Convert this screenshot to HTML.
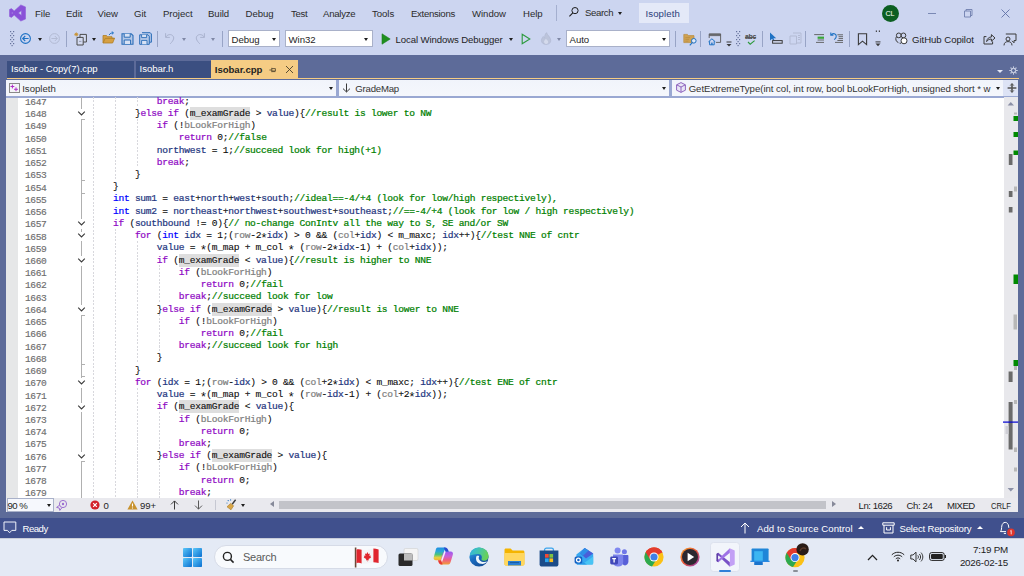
<!DOCTYPE html>
<html><head><meta charset="utf-8"><title>Isopleth - Microsoft Visual Studio</title>
<style>
*{margin:0;padding:0;box-sizing:border-box}
html,body{width:1024px;height:576px;overflow:hidden}
body{position:relative;background:#5d6b99;font-family:"Liberation Sans",sans-serif;font-size:9.6px;letter-spacing:-0.04px;color:#1e1e1e}
.abs{position:absolute}
#top{position:absolute;left:0;top:0;width:1024px;height:55px;background:#ccd5f0}
.mi{position:absolute;top:7px;height:13px;line-height:13px;white-space:pre;color:#2b2b2b}
.tx{position:absolute;white-space:pre;line-height:13px;height:13px}
.combo{position:absolute;background:#fff;border:1px solid #a9b1c9;height:17px;top:30px}
.combo span{position:absolute;left:2.6px;top:2px;line-height:13px;white-space:pre}
.arr{position:absolute;width:0;height:0;border-left:2.5px solid transparent;border-right:2.5px solid transparent;border-top:3px solid #1e1e1e}
.sep{position:absolute;width:1.3px;background:#98a4c6;top:30.5px;height:16.5px}
/* tabs */
.tab{position:absolute;top:61px;height:17px;background:#3b4f81;color:#fff;line-height:15px;padding-left:4px;white-space:pre}
#tabline{position:absolute;left:6.5px;top:77.7px;width:1012px;height:1.8px;background:#f5cc84}
#nav{position:absolute;left:6.2px;top:79.5px;width:1012.3px;height:18px;background:#9aa8d2}
.nb{position:absolute;top:0;height:16.4px;background:linear-gradient(#f1f4fb,#f5f7fc)}
.nb span{position:absolute;top:2px;line-height:13px;white-space:pre;color:#333;letter-spacing:-0.12px}
/* editor */
#ed{position:absolute;left:0;top:0;width:1024px;height:576px;pointer-events:none;font-family:"Liberation Mono",monospace;font-size:9.6px;letter-spacing:-0.27px}
#edbg{position:absolute;left:6px;top:97.5px;width:998px;height:401px;background:#fff}
#gut{position:absolute;left:6px;top:97.5px;width:11.7px;height:401px;background:#e6e7e8}
.fl{position:absolute;width:1.2px;background:#b0b0b0}
.ft{position:absolute;width:3.6px;height:1px;background:#b0b0b0}
.ln{position:absolute;left:18px;width:28.3px;letter-spacing:-0.45px;text-align:right;height:12px;line-height:12px;color:#6e6e6e;white-space:pre;-webkit-text-stroke:0.15px #6e6e6e}
.cl{position:absolute;height:12px;line-height:12px;white-space:pre;color:#0c0c0c;-webkit-text-stroke:0.1px currentColor}
.k{color:#8f08c4}.t{color:#0000ff}.c{color:#008000}.p{color:#808080}.l{color:#1f377f}
.k,.t,.c,.p,.l{-webkit-text-stroke:0.22px currentColor}
.h{background:#dedede;padding:1.3px 0 0.6px}
.ig{position:absolute;width:1px;background:repeating-linear-gradient(to bottom,#d8d8dd 0,#d8d8dd 2px,transparent 2px,transparent 3.5px)}
.fd{position:absolute;left:76.5px}
.a{display:inline-block;width:5.49px;letter-spacing:0;font-size:12.5px;line-height:1px;vertical-align:-3.6px;text-indent:-1px;-webkit-text-stroke:0}

</style></head><body>
<div id="top"></div>
<!-- VS logo -->
<svg class="abs" style="left:8px;top:4px" width="18" height="18" viewBox="0 0 18 18"><path d="M12.8 0.9 L17.5 2.9 V15.1 L12.8 17.1 L6.2 11.1 L3.4 13.4 L1.5 12.5 V5.5 L3.4 4.6 L6.2 6.9 Z M13.4 6.6 L10.4 9 L13.4 11.4 Z M3.9 7.9 V10.1 L5.1 9 Z" fill="#8a52d8" stroke="#8a52d8" stroke-width="0.5" stroke-linejoin="round" fill-rule="evenodd"/></svg>
<div class="mi" style="left:35px">File</div>
<div class="mi" style="left:66px">Edit</div>
<div class="mi" style="left:97.5px">View</div>
<div class="mi" style="left:134px">Git</div>
<div class="mi" style="left:163px">Project</div>
<div class="mi" style="left:208px">Build</div>
<div class="mi" style="left:245.5px">Debug</div>
<div class="mi" style="left:291px;letter-spacing:-0.3px">Test</div>
<div class="mi" style="left:323px;letter-spacing:-0.25px">Analyze</div>
<div class="mi" style="left:372px">Tools</div>
<div class="mi" style="left:411px;letter-spacing:-0.3px">Extensions</div>
<div class="mi" style="left:472px">Window</div>
<div class="mi" style="left:523px">Help</div>
<div class="abs" style="left:556px;top:5px;width:1px;height:16px;background:#a4afcf"></div>
<svg class="abs" style="left:568px;top:6px" width="12" height="12" viewBox="0 0 12 12"><circle cx="7" cy="4.6" r="3.1" fill="none" stroke="#1e1e1e" stroke-width="1"/><path d="M4.8 6.9 L1.4 10.4" stroke="#1e1e1e" stroke-width="1.1" fill="none"/></svg>
<div class="mi" style="left:585px;top:6px;letter-spacing:-0.35px">Search</div>
<div class="arr" style="left:617.6px;top:12px"></div>
<div class="abs" style="left:638.5px;top:3px;width:50px;height:20px;background:#e4e9f8"></div>
<div class="mi" style="left:645.5px;color:#2c3e7a;letter-spacing:0.1px">Isopleth</div>
<div class="abs" style="left:881.5px;top:4.5px;width:17px;height:17px;border-radius:50%;background:#0c5f22;color:#fff;font-size:7.2px;text-align:center;line-height:17px;letter-spacing:0">CL</div>
<div class="abs" style="left:928px;top:12.5px;width:8px;height:1px;background:#7a89b4"></div>
<svg class="abs" style="left:962px;top:7px" width="12" height="12" viewBox="0 0 12 12"><path d="M2.5 4 H8.5 V10 H2.5 Z M4 4 V2.5 H10 V8.5 H8.5" fill="none" stroke="#6f7fae" stroke-width="0.9"/></svg>
<svg class="abs" style="left:1000px;top:8px" width="11" height="11" viewBox="0 0 11 11"><path d="M1.5 1.5 L9.5 9.5 M9.5 1.5 L1.5 9.5" stroke="#5f71a6" stroke-width="0.9"/></svg>
<!-- toolbar -->
<svg class="abs" style="left:10.2px;top:29.5px" width="5" height="17" viewBox="0 0 5 17"><g fill="#66729c"><rect x="0" y="1" width="1.2" height="1.2"/><rect x="3" y="1" width="1.2" height="1.2"/><rect x="1.5" y="3" width="1.2" height="1.2"/><rect x="0" y="5" width="1.2" height="1.2"/><rect x="3" y="5" width="1.2" height="1.2"/><rect x="1.5" y="7" width="1.2" height="1.2"/><rect x="0" y="9" width="1.2" height="1.2"/><rect x="3" y="9" width="1.2" height="1.2"/><rect x="1.5" y="11" width="1.2" height="1.2"/><rect x="0" y="13" width="1.2" height="1.2"/><rect x="3" y="13" width="1.2" height="1.2"/><rect x="1.5" y="15" width="1.2" height="1.2"/></g></svg>
<svg class="abs" style="left:19px;top:32px" width="13" height="13" viewBox="0 0 13 13"><circle cx="6.5" cy="6.5" r="4.9" fill="none" stroke="#1f72c4" stroke-width="1.1"/><path d="M9.6 6.5 H3.8 M6.2 4 L3.7 6.5 L6.2 9" fill="none" stroke="#1f72c4" stroke-width="1.1"/></svg>
<div class="arr" style="left:37.5px;top:38px"></div>
<svg class="abs" style="left:47.5px;top:31.6px" width="13" height="13" viewBox="0 0 13 13"><circle cx="6.5" cy="6.5" r="4.9" fill="none" stroke="#b3bbd4" stroke-width="1"/><path d="M3.4 6.5 H9.2 M6.8 4 L9.3 6.5 L6.8 9" fill="none" stroke="#b3bbd4" stroke-width="1"/></svg>
<div class="sep" style="left:66px"></div>
<svg class="abs" style="left:74px;top:32px" width="14" height="14" viewBox="0 0 14 14"><path d="M6 2.4 H12.4 V10 H6 Z" fill="#d3daf0" stroke="#4a4a4a" stroke-width="1"/><path d="M3 5.4 H9.2 V13 H3 Z" fill="#d3daf0" stroke="#4a4a4a" stroke-width="1"/><path d="M5 9.4 H7.4" stroke="#8a8fa8" stroke-width="0.8"/><path d="M2.3 0.4 V4.4 M0.3 2.4 H4.3 M0.9 1 L3.7 3.8 M3.7 1 L0.9 3.8" stroke="#c8922e" stroke-width="0.9"/></svg>
<div class="arr" style="left:92px;top:38px"></div>
<svg class="abs" style="left:101.8px;top:30.8px" width="14" height="14" viewBox="0 0 14 14"><path d="M1 12 V4.5 H4.5 L5.5 5.7 H10 V7.2 H12.6 L10.6 12 Z" fill="#d6a043" stroke="#b07f24" stroke-width="0.8"/><path d="M1.2 11.8 L3.2 7.4 H12.4" fill="none" stroke="#b07f24" stroke-width="0.8"/><path d="M7.2 4 C8 2.2 9.6 1.8 11.2 1.9 M9.8 0.6 L11.5 1.9 L9.9 3.4" fill="none" stroke="#1f72c4" stroke-width="1"/></svg>
<svg class="abs" style="left:120.5px;top:33px" width="13" height="12" viewBox="0 0 13 12"><path d="M1 0.8 H10.2 L12 2.6 V11.2 H1 Z" fill="#b4c8e8" stroke="#2a6db8" stroke-width="1.1"/><path d="M3.2 0.8 V4.2 H9.2 V0.8" fill="#d8e2f4" stroke="#2a6db8" stroke-width="1"/><path d="M3.2 11 V7 H9.6 V11" fill="#d8e2f4" stroke="#2a6db8" stroke-width="1"/></svg>
<svg class="abs" style="left:138.5px;top:32px" width="13" height="13" viewBox="0 0 13 13"><path d="M3 0.7 H11.2 L12.4 2 V10.2 H10.4" fill="#b4c8e8" stroke="#2a6db8" stroke-width="1"/><path d="M0.7 2.8 H9 L10.3 4.2 V12.3 H0.7 Z" fill="#b4c8e8" stroke="#2a6db8" stroke-width="1"/><path d="M2.6 2.8 V5.6 H7.6 V2.8 M2.6 12.2 V8.4 H8 V12.2" fill="#d8e2f4" stroke="#2a6db8" stroke-width="0.9"/></svg>
<div class="sep" style="left:156.5px"></div>
<svg class="abs" style="left:164px;top:32px" width="12" height="13" viewBox="0 0 12 13"><path d="M1.6 1.2 V5.4 H5.8 M1.8 5.2 C3.2 2.6 6.4 1.8 8.4 3.4 C10.6 5.2 10 8.2 6.2 11.8" fill="none" stroke="#aab3cf" stroke-width="1"/></svg>
<div class="arr" style="left:182px;top:38px;border-top-color:#7f88a6"></div>
<svg class="abs" style="left:193.5px;top:32px" width="12" height="13" viewBox="0 0 12 13"><path d="M10.4 1.2 V5.4 H6.2 M10.2 5.2 C8.8 2.6 5.6 1.8 3.6 3.4 C1.4 5.2 2 8.2 5.8 11.8" fill="none" stroke="#aab3cf" stroke-width="1"/></svg>
<div class="arr" style="left:210.5px;top:38px;border-top-color:#7f88a6"></div>
<div class="sep" style="left:221.5px"></div>
<div class="combo" style="left:228px;width:51.5px"><span>Debug</span></div>
<div class="arr" style="left:271.5px;top:37.5px"></div>
<div class="combo" style="left:285px;width:87.5px"><span>Win32</span></div>
<div class="arr" style="left:363.5px;top:37.5px"></div>
<svg class="abs" style="left:380.5px;top:33px" width="10" height="12" viewBox="0 0 10 12"><path d="M1 0.8 L9.2 6 L1 11.2 Z" fill="#1f8f1f" stroke="#1b7f1b" stroke-width="0.6"/></svg>
<div class="tx" style="left:395.5px;top:33px;letter-spacing:-0.1px">Local Windows Debugger</div>
<div class="arr" style="left:509px;top:38px"></div>
<svg class="abs" style="left:520.5px;top:33px" width="10" height="12" viewBox="0 0 10 12"><path d="M1.2 1.2 L8.8 6 L1.2 10.8 Z" fill="none" stroke="#2c9a3c" stroke-width="1.1"/></svg>
<svg class="abs" style="left:540px;top:32px" width="12" height="13" viewBox="0 0 12 13"><path d="M6.6 0.6 C7 3 10.8 5 10.8 8.6 C10.8 11 8.8 12.4 6.2 12.4 C3.6 12.4 1.4 11 1.4 8.4 C1.4 6.6 2.4 5.6 3.2 4.4 C3.6 5.2 4 5.8 4.6 6 C4.4 4 5.2 1.8 6.6 0.6 Z" fill="#bcc4db" stroke="#aab2cc" stroke-width="0.5"/><path d="M6.2 12 C4.8 12 4 11 4 9.8 C4 8.6 5 7.8 6 6.8 C6.6 8 8.2 8.6 8.2 10 C8.2 11.2 7.4 12 6.2 12 Z" fill="#d4daec"/></svg>
<div class="arr" style="left:556.5px;top:38px;border-top-color:#7f88a6"></div>
<div class="combo" style="left:566px;width:104px"><span>Auto</span></div>
<div class="arr" style="left:661.5px;top:37.5px"></div>
<div class="sep" style="left:675px"></div>
<svg class="abs" style="left:682.5px;top:32.5px" width="15" height="14" viewBox="0 0 15 14"><path d="M0.8 9.6 V1.4 H4.4 L5.4 2.6 H11 V9.6 Z" fill="#cfa152" stroke="#b98c3c" stroke-width="0.7"/><path d="M2.4 4.6 H7 M2.4 6.4 H6 M2.4 8.2 H5.4" stroke="#b98c3c" stroke-width="0.7"/><circle cx="10.8" cy="7.8" r="2.3" fill="#dfe8f8" stroke="#1f72c4" stroke-width="1"/><path d="M9.2 9.6 L6.8 12.4" stroke="#1f72c4" stroke-width="1.1"/></svg>
<div class="sep" style="left:700px"></div>
<svg class="abs" style="left:707.5px;top:33px" width="14" height="13" viewBox="0 0 14 13"><path d="M1.2 5 V0.9 H12.6 V9.4 H8" fill="none" stroke="#585858" stroke-width="0.9"/><path d="M1.2 1.4 H12.6 M1.2 2.6 H12.6" stroke="#585858" stroke-width="0.9"/><path d="M0.5 8.8 L3.9 5.8 L7.3 8.8 M1.6 8.2 V11.8 H6.2 V8.2" fill="none" stroke="#1f72c4" stroke-width="1"/><rect x="3.2" y="9.6" width="1.4" height="2.2" fill="#1f72c4"/></svg>
<svg class="abs" style="left:725.5px;top:41px" width="6" height="6" viewBox="0 0 6 6"><rect x="0.5" y="0.5" width="5" height="1" fill="#3a3a3a"/><path d="M0.5 3 H5.5 L3 5.6 Z" fill="#3a3a3a"/></svg>
<svg class="abs" style="left:736.2px;top:29.5px" width="5" height="17" viewBox="0 0 5 17"><g fill="#66729c"><rect x="0" y="1" width="1.2" height="1.2"/><rect x="3" y="1" width="1.2" height="1.2"/><rect x="1.5" y="3" width="1.2" height="1.2"/><rect x="0" y="5" width="1.2" height="1.2"/><rect x="3" y="5" width="1.2" height="1.2"/><rect x="1.5" y="7" width="1.2" height="1.2"/><rect x="0" y="9" width="1.2" height="1.2"/><rect x="3" y="9" width="1.2" height="1.2"/><rect x="1.5" y="11" width="1.2" height="1.2"/><rect x="0" y="13" width="1.2" height="1.2"/><rect x="3" y="13" width="1.2" height="1.2"/><rect x="1.5" y="15" width="1.2" height="1.2"/></g></svg>
<div class="abs" style="left:745px;top:33px;font-size:7px;font-weight:bold;letter-spacing:-0.3px;color:#4a4a4a;line-height:8px">abc</div><div class="abs" style="left:745px;top:36.5px;width:10.8px;height:0.6px;background:#5a5a5a"></div>
<svg class="abs" style="left:747px;top:39.6px" width="9" height="5" viewBox="0 0 9 5"><path d="M1 2 L3.2 4.2 L7.6 0.6" fill="none" stroke="#2c9a3c" stroke-width="1.1"/></svg>
<div class="sep" style="left:762px"></div>
<svg class="abs" style="left:769px;top:32px" width="15" height="14" viewBox="0 0 15 14"><path d="M1 0.4 V8.6 L3.1 6.8 L4.6 9.6 L5.8 9 L4.4 6.2 H7.2 Z" fill="#1f72c4"/><rect x="3.6" y="8.6" width="9.6" height="2.6" fill="#d3daf0" stroke="#3a3a3a" stroke-width="1"/></svg>
<svg class="abs" style="left:788.5px;top:32px" width="13" height="13" viewBox="0 0 13 13"><path d="M4 1 H12 V11 H8 M1 4 H7.5 V12 H1 Z M9 3.5 H11 M9 5.5 H11 M9 7.5 H11" fill="none" stroke="#b3bbd4" stroke-width="1"/></svg>
<div class="sep" style="left:805px"></div>
<svg class="abs" style="left:813px;top:33px" width="12" height="11" viewBox="0 0 12 11"><path d="M1.2 1.6 H11 M4.6 7 H11 M3 9.4 H11" stroke="#5a5a5a" stroke-width="0.9"/><rect x="4.6" y="3.6" width="6.4" height="2.2" fill="#3aa83a"/></svg>
<svg class="abs" style="left:830px;top:32px" width="14" height="12" viewBox="0 0 14 12"><path d="M7.4 2.8 H13 M8.6 4.7 H13 M8.6 6.6 H13 M7.4 8.5 H13 M5 10.4 H13" stroke="#5a5a5a" stroke-width="0.9"/><path d="M1.4 2.6 C3.8 0.6 6.8 2 6.2 4.8 C6 6 5.2 6.8 4.2 7.6 M0.8 0.6 V3.2 H3.4" fill="none" stroke="#1f72c4" stroke-width="1.1"/></svg>
<div class="sep" style="left:848.5px"></div>
<svg class="abs" style="left:857px;top:32.5px" width="11" height="13" viewBox="0 0 11 13"><path d="M1.4 0.8 H9.6 V11.6 L5.5 8.2 L1.4 11.6 Z" fill="none" stroke="#3a3a3a" stroke-width="1.1"/></svg>
<svg class="abs" style="left:874.5px;top:30px" width="6" height="17" viewBox="0 0 6 17"><rect x="0.8" y="0.5" width="1.2" height="1.4" fill="#3a3a3a"/><rect x="3.8" y="0.5" width="1.2" height="1.4" fill="#3a3a3a"/><rect x="0.5" y="11.4" width="5" height="1" fill="#3a3a3a"/><path d="M0.5 13.6 H5.5 L3 16.2 Z" fill="#3a3a3a"/></svg>
<svg class="abs" style="left:895px;top:32px" width="13" height="13" viewBox="0 0 13 13"><circle cx="3.8" cy="3.4" r="2.4" fill="none" stroke="#3a3a3a" stroke-width="1"/><circle cx="8.4" cy="3.4" r="2.4" fill="none" stroke="#3a3a3a" stroke-width="1"/><path d="M1.4 4.6 C0.2 7 0.8 9.6 3.4 10.6 M4.6 11.2 H6" fill="none" stroke="#3a3a3a" stroke-width="1"/><circle cx="9" cy="8.8" r="3" fill="#fff" stroke="#3a3a3a" stroke-width="1"/></svg>
<div class="tx" style="left:912px;top:33px">GitHub Copilot</div>
<svg class="abs" style="left:982.5px;top:32.5px" width="13" height="12" viewBox="0 0 13 12"><path d="M3.4 3.6 H1 V11 H9.6 V8.4" fill="none" stroke="#3a3a3a" stroke-width="1"/><path d="M3.6 8.6 C4 5.6 6 4 8.4 4 V1.6 L12 5 L8.4 8.2 V6 C6.4 6 4.8 6.8 3.6 8.6 Z" fill="none" stroke="#3a3a3a" stroke-width="1"/></svg>
<svg class="abs" style="left:1003px;top:32.5px" width="14" height="13" viewBox="0 0 14 13"><path d="M2.8 1 H13 V7.6 H11 V9.8 L9 7.8" fill="none" stroke="#3a3a3a" stroke-width="1"/><circle cx="5" cy="6" r="2" fill="#ccd5f0" stroke="#3a3a3a" stroke-width="1"/><path d="M1 12.4 C1 9.6 3 8.6 5 8.6 C7 8.6 9 9.6 9 12.4" fill="#ccd5f0" stroke="#3a3a3a" stroke-width="1"/></svg>
<!-- document tabs -->
<div class="tab" style="left:7px;width:126.5px">Isobar - Copy(7).cpp</div>
<div class="tab" style="left:135.5px;width:75px">Isobar.h</div>
<div class="tab" style="left:210.8px;width:87.2px;top:59.7px;height:18.3px;background:#f5cc84;color:#1e1e1e;font-weight:bold;line-height:19px">Isobar.cpp</div>
<svg class="abs" style="left:269px;top:65.6px" width="8" height="8" viewBox="0 0 8 8"><path d="M0.4 4 H2.8 M2.8 1.8 V6.2 M2.8 2.6 H6.4 V5 H2.8 M3.2 5.6 H6.4" fill="none" stroke="#4a3f2a" stroke-width="0.8"/></svg>
<svg class="abs" style="left:284.5px;top:64.5px" width="9" height="9" viewBox="0 0 9 9"><path d="M1 1 L8 8 M8 1 L1 8" stroke="#4a3f2a" stroke-width="0.9"/></svg>
<div class="arr" style="left:996.5px;top:70px;border-top-color:#e1e6f4;border-left-width:3px;border-right-width:3px;border-top-width:3.2px"></div>
<svg class="abs" style="left:1009px;top:65.5px" width="9" height="9" viewBox="0 0 9 9"><circle cx="4.5" cy="4.5" r="2.1" fill="none" stroke="#e1e6f4" stroke-width="1"/><path d="M4.5 0.4 V1.8 M4.5 7.2 V8.6 M0.4 4.5 H1.8 M7.2 4.5 H8.6 M1.6 1.6 L2.6 2.6 M6.4 6.4 L7.4 7.4 M7.4 1.6 L6.4 2.6 M1.6 7.4 L2.6 6.4" stroke="#e1e6f4" stroke-width="1.1"/></svg>
<div id="tabline"></div>
<div id="nav">
  <div class="nb" style="left:0;width:329.5px"><span style="left:16px;letter-spacing:0">Isopleth</span></div>
  <div class="nb" style="left:333.1px;width:329.8px"><span style="left:16px;letter-spacing:-0.2px">GradeMap</span></div>
  <div class="nb" style="left:666.2px;width:330.2px"><span style="left:16.3px;letter-spacing:-0.03px">GetExtremeType(int col, int row, bool bLookForHigh, unsigned short * w</span></div>
  <div class="nb" style="left:996.8px;width:15.5px;background:#dde3f5"></div>
</div>
<svg class="abs" style="left:9px;top:82.5px" width="11" height="10" viewBox="0 0 11 10"><rect x="0.5" y="0.5" width="10" height="9" fill="#f4f4f8" stroke="#8a8a8a" stroke-width="1"/><path d="M3.4 1.6 V5.4 M1.5 3.5 H5.3 M7 4.4 V8.2 M5.1 6.3 H8.9" stroke="#b030c8" stroke-width="1"/></svg>
<div class="arr" style="left:329px;top:86.9px"></div>
<svg class="abs" style="left:342px;top:83px" width="9" height="10" viewBox="0 0 9 10"><path d="M4.5 0.5 V8.8 M1 5.6 L4.5 9 L8 5.6" fill="none" stroke="#3a3a3a" stroke-width="1"/></svg>
<div class="arr" style="left:662.4px;top:86.9px"></div>
<svg class="abs" style="left:675.5px;top:82px" width="10" height="11" viewBox="0 0 10 11"><path d="M5 0.6 L9.4 2.8 V8.2 L5 10.4 L0.6 8.2 V2.8 Z" fill="#e9e6f6" stroke="#8556b8" stroke-width="0.9"/><path d="M0.8 2.9 L5 5 L9.2 2.9 M5 5 V10.2" fill="none" stroke="#8556b8" stroke-width="0.9"/></svg>
<div class="arr" style="left:995.6px;top:86.9px"></div>
<svg class="abs" style="left:1006.5px;top:83px" width="10" height="10" viewBox="0 0 10 10"><path d="M5 0.8 V9.2 M0.6 5 H9.4" fill="none" stroke="#555" stroke-width="1.6"/><path d="M3.2 2.6 L5 0.6 L6.8 2.6 M3.2 7.4 L5 9.4 L6.8 7.4" fill="none" stroke="#555" stroke-width="1"/></svg>
<div id="edbg"></div>

<div id="ed">
<div id="gut"></div>
<div class="fl" style="left:81.0px;top:97.0px;height:12.3px"></div>
<div class="fl" style="left:81.0px;top:118.8px;height:100.6px"></div>
<div class="fl" style="left:81.0px;top:228.9px;height:2.7px"></div>
<div class="fl" style="left:81.0px;top:241.1px;height:15.0px"></div>
<div class="fl" style="left:81.0px;top:265.6px;height:39.4px"></div>
<div class="fl" style="left:81.0px;top:314.5px;height:63.9px"></div>
<div class="fl" style="left:81.0px;top:387.9px;height:15.0px"></div>
<div class="fl" style="left:81.0px;top:412.4px;height:39.4px"></div>
<div class="fl" style="left:81.0px;top:461.3px;height:36.7px"></div>
<div class="ft" style="left:81.0px;top:118.8px"></div>
<div class="ft" style="left:81.0px;top:314.5px"></div>
<div class="ft" style="left:81.0px;top:461.3px"></div>
<div class="ft" style="left:81.0px;top:180.4px"></div>
<div class="ft" style="left:81.0px;top:192.6px"></div>
<div class="ft" style="left:81.0px;top:363.8px"></div>
<div class="ft" style="left:81.0px;top:376.1px"></div>
<div class="ln" style="top:97px">1647</div>
<div class="cl" style="top:96px;left:156.84px"><span class="k">break</span>;</div>
<div class="ln" style="top:109px">1648</div>
<div class="cl" style="top:108px;left:134.88px">}<span class="k">else</span> <span class="k">if</span> (<span class="h">m_examGrade</span> &gt; <span class="l">value</span>){<span class="c">//result is lower to NW</span></div>
<div class="ln" style="top:121px">1649</div>
<div class="cl" style="top:120px;left:156.84px"><span class="k">if</span> (!<span class="p">bLookForHigh</span>)</div>
<div class="ln" style="top:134px">1650</div>
<div class="cl" style="top:132px;left:178.80px"><span class="k">return</span> 0;<span class="c">//false</span></div>
<div class="ln" style="top:146px">1651</div>
<div class="cl" style="top:145px;left:156.84px"><span class="l">northwest</span> = 1;<span class="c">//succeed look for high(+1)</span></div>
<div class="ln" style="top:158px">1652</div>
<div class="cl" style="top:157px;left:156.84px"><span class="k">break</span>;</div>
<div class="ln" style="top:170px">1653</div>
<div class="cl" style="top:169px;left:134.88px">}</div>
<div class="ln" style="top:183px">1654</div>
<div class="cl" style="top:181px;left:112.92px">}</div>
<div class="ln" style="top:195px">1655</div>
<div class="cl" style="top:193px;left:112.92px"><span class="t">int</span> <span class="l">sum1</span> = <span class="l">east</span>+<span class="l">north</span>+<span class="l">west</span>+<span class="l">south</span>;<span class="c">//ideal==-4/+4 (look for low/high respectively),</span></div>
<div class="ln" style="top:207px">1656</div>
<div class="cl" style="top:206px;left:112.92px"><span class="t">int</span> <span class="l">sum2</span> = <span class="l">northeast</span>+<span class="l">northwest</span>+<span class="l">southwest</span>+<span class="l">southeast</span>;<span class="c">//==-4/+4 (look for low / high respectively)</span></div>
<div class="ln" style="top:219px">1657</div>
<div class="cl" style="top:218px;left:112.92px"><span class="k">if</span> (<span class="l">southbound</span> != 0){<span class="c">// no-change ConIntv all the way to S, SE and/or SW</span></div>
<div class="ln" style="top:232px">1658</div>
<div class="cl" style="top:230px;left:134.88px"><span class="k">for</span> (<span class="t">int</span> <span class="l">idx</span> = 1;(<span class="p">row</span>-2<span class="a">*</span><span class="l">idx</span>) &gt; 0 &amp;&amp; (<span class="p">col</span>+<span class="l">idx</span>) &lt; m_maxc; <span class="l">idx</span>++){<span class="c">//test NNE of cntr</span></div>
<div class="ln" style="top:244px">1659</div>
<div class="cl" style="top:242px;left:156.84px"><span class="l">value</span> = <span class="a">*</span>(m_map + m_col <span class="a">*</span> (<span class="p">row</span>-2<span class="a">*</span><span class="l">idx</span>-1) + (<span class="p">col</span>+<span class="l">idx</span>));</div>
<div class="ln" style="top:256px">1660</div>
<div class="cl" style="top:255px;left:156.84px"><span class="k">if</span> (<span class="h">m_examGrade</span> &lt; <span class="l">value</span>){<span class="c">//result is higher to NNE</span></div>
<div class="ln" style="top:268px">1661</div>
<div class="cl" style="top:267px;left:178.80px"><span class="k">if</span> (<span class="p">bLookForHigh</span>)</div>
<div class="ln" style="top:280px">1662</div>
<div class="cl" style="top:279px;left:200.76px"><span class="k">return</span> 0;<span class="c">//fail</span></div>
<div class="ln" style="top:293px">1663</div>
<div class="cl" style="top:291px;left:178.80px"><span class="k">break</span>;<span class="c">//succeed look for low</span></div>
<div class="ln" style="top:305px">1664</div>
<div class="cl" style="top:304px;left:156.84px">}<span class="k">else</span> <span class="k">if</span> (<span class="h">m_examGrade</span> &gt; <span class="l">value</span>){<span class="c">//result is lower to NNE</span></div>
<div class="ln" style="top:317px">1665</div>
<div class="cl" style="top:316px;left:178.80px"><span class="k">if</span> (!<span class="p">bLookForHigh</span>)</div>
<div class="ln" style="top:329px">1666</div>
<div class="cl" style="top:328px;left:200.76px"><span class="k">return</span> 0;<span class="c">//fail</span></div>
<div class="ln" style="top:342px">1667</div>
<div class="cl" style="top:340px;left:178.80px"><span class="k">break</span>;<span class="c">//succeed look for high</span></div>
<div class="ln" style="top:354px">1668</div>
<div class="cl" style="top:352px;left:156.84px">}</div>
<div class="ln" style="top:366px">1669</div>
<div class="cl" style="top:365px;left:134.88px">}</div>
<div class="ln" style="top:378px">1670</div>
<div class="cl" style="top:377px;left:134.88px"><span class="k">for</span> (<span class="l">idx</span> = 1;(<span class="p">row</span>-<span class="l">idx</span>) &gt; 0 &amp;&amp; (<span class="p">col</span>+2<span class="a">*</span><span class="l">idx</span>) &lt; m_maxc; <span class="l">idx</span>++){<span class="c">//test ENE of cntr</span></div>
<div class="ln" style="top:391px">1671</div>
<div class="cl" style="top:389px;left:156.84px"><span class="l">value</span> = <span class="a">*</span>(m_map + m_col <span class="a">*</span> (<span class="p">row</span>-<span class="l">idx</span>-1) + (<span class="p">col</span>+2<span class="a">*</span><span class="l">idx</span>));</div>
<div class="ln" style="top:403px">1672</div>
<div class="cl" style="top:401px;left:156.84px"><span class="k">if</span> (<span class="h">m_examGrade</span> &lt; <span class="l">value</span>){</div>
<div class="ln" style="top:415px">1673</div>
<div class="cl" style="top:414px;left:178.80px"><span class="k">if</span> (<span class="p">bLookForHigh</span>)</div>
<div class="ln" style="top:427px">1674</div>
<div class="cl" style="top:426px;left:200.76px"><span class="k">return</span> 0;</div>
<div class="ln" style="top:439px">1675</div>
<div class="cl" style="top:438px;left:178.80px"><span class="k">break</span>;</div>
<div class="ln" style="top:452px">1676</div>
<div class="cl" style="top:450px;left:156.84px">}<span class="k">else</span> <span class="k">if</span> (<span class="h">m_examGrade</span> &gt; <span class="l">value</span>){</div>
<div class="ln" style="top:464px">1677</div>
<div class="cl" style="top:462px;left:178.80px"><span class="k">if</span> (!<span class="p">bLookForHigh</span>)</div>
<div class="ln" style="top:476px">1678</div>
<div class="cl" style="top:475px;left:200.76px"><span class="k">return</span> 0;</div>
<div class="ln" style="top:488px">1679</div>
<div class="cl" style="top:487px;left:178.80px"><span class="k">break</span>;</div>
<div class="ig" style="left:92.7px;top:97.0px;height:401.0px"></div>
<div class="ig" style="left:114.6px;top:97.0px;height:82.6px"></div>
<div class="ig" style="left:114.6px;top:228.5px;height:269.5px"></div>
<div class="ig" style="left:136.6px;top:97.0px;height:9.2px"></div>
<div class="ig" style="left:136.6px;top:118.5px;height:48.9px"></div>
<div class="ig" style="left:136.6px;top:240.8px;height:122.3px"></div>
<div class="ig" style="left:136.6px;top:387.5px;height:110.5px"></div>
<div class="ig" style="left:158.5px;top:265.2px;height:36.7px"></div>
<div class="ig" style="left:158.5px;top:314.1px;height:36.7px"></div>
<div class="ig" style="left:158.5px;top:412.0px;height:36.7px"></div>
<div class="ig" style="left:158.5px;top:460.9px;height:37.1px"></div>
<svg class="fd" style="top:110.13px" width="9" height="7" viewBox="0 0 9 7"><path d="M1.2 1.6 L4.5 4.9 L7.8 1.6" fill="none" stroke="#3a3a3a" stroke-width="1.1"/></svg>
<svg class="fd" style="top:220.20px" width="9" height="7" viewBox="0 0 9 7"><path d="M1.2 1.6 L4.5 4.9 L7.8 1.6" fill="none" stroke="#3a3a3a" stroke-width="1.1"/></svg>
<svg class="fd" style="top:232.43px" width="9" height="7" viewBox="0 0 9 7"><path d="M1.2 1.6 L4.5 4.9 L7.8 1.6" fill="none" stroke="#3a3a3a" stroke-width="1.1"/></svg>
<svg class="fd" style="top:256.89px" width="9" height="7" viewBox="0 0 9 7"><path d="M1.2 1.6 L4.5 4.9 L7.8 1.6" fill="none" stroke="#3a3a3a" stroke-width="1.1"/></svg>
<svg class="fd" style="top:305.81px" width="9" height="7" viewBox="0 0 9 7"><path d="M1.2 1.6 L4.5 4.9 L7.8 1.6" fill="none" stroke="#3a3a3a" stroke-width="1.1"/></svg>
<svg class="fd" style="top:379.19px" width="9" height="7" viewBox="0 0 9 7"><path d="M1.2 1.6 L4.5 4.9 L7.8 1.6" fill="none" stroke="#3a3a3a" stroke-width="1.1"/></svg>
<svg class="fd" style="top:403.65px" width="9" height="7" viewBox="0 0 9 7"><path d="M1.2 1.6 L4.5 4.9 L7.8 1.6" fill="none" stroke="#3a3a3a" stroke-width="1.1"/></svg>
<svg class="fd" style="top:452.57px" width="9" height="7" viewBox="0 0 9 7"><path d="M1.2 1.6 L4.5 4.9 L7.8 1.6" fill="none" stroke="#3a3a3a" stroke-width="1.1"/></svg>
</div>
<!-- vertical scrollbar -->
<div class="abs" style="left:1003.5px;top:97px;width:14.5px;height:401px;background:#e8e8ec"></div>
<svg class="abs" style="left:1003px;top:97px" width="15" height="401" viewBox="0 0 15 401">
<path d="M4.6 8.6 L7.8 5 L11 8.6 Z" fill="#8b90a6"/>
<path d="M4.6 391 L7.8 394.6 L11 391 Z" fill="#8b90a6"/>
<rect x="11" y="15.5" width="3" height="2" fill="#b8b8b8"/>
<rect x="10.5" y="19" width="4.5" height="5" fill="#008a00"/>
<rect x="10.5" y="35" width="4.5" height="5" fill="#008a00"/>
<rect x="10.5" y="53.5" width="4.5" height="4.5" fill="#008a00"/>
<rect x="5.8" y="57" width="3.7" height="11" fill="#6a6a6a"/>
<rect x="11" y="89.5" width="3" height="5" fill="#b8b8b8"/>
<rect x="5.8" y="94" width="3.7" height="6" fill="#6a6a6a"/>
<rect x="5.8" y="110" width="3.7" height="5.5" fill="#6a6a6a"/>
<rect x="10.5" y="177.5" width="4.5" height="9.5" fill="#008a00"/>
<rect x="10.5" y="217.5" width="3.5" height="15" fill="#b8b8b8"/>
<rect x="10.5" y="263" width="4.5" height="6" fill="#008a00"/>
<rect x="11" y="269" width="3" height="4" fill="#b8b8b8"/>
<rect x="5.6" y="274.5" width="4" height="10.5" fill="#6a6a6a"/>
<rect x="11" y="303" width="3" height="4" fill="#b8b8b8"/>
<rect x="5.6" y="305" width="4" height="47.5" fill="#6a6a6a"/>
<rect x="2.5" y="329" width="3" height="8" fill="#cfcfd6"/>
<rect x="0" y="324.5" width="15" height="1.2" fill="#0000d0"/>
<rect x="11" y="350.5" width="3" height="4.5" fill="#b8b8b8"/>
<rect x="11" y="370.5" width="3" height="4" fill="#b8b8b8"/>
</svg>
<!-- bottom info bar -->
<div class="abs" style="left:6px;top:498px;width:1012px;height:14px;background:#e9e9ee"></div>
<div class="abs" style="left:6.5px;top:498px;width:47px;height:14px;background:#f6f8fd;border:1px solid #a9b1c9"></div>
<div class="tx" style="left:7.5px;top:498.5px;letter-spacing:-0.5px">90 %</div>
<div class="arr" style="left:46.5px;top:504px"></div>
<svg class="abs" style="left:55.5px;top:499px" width="12" height="12" viewBox="0 0 12 12"><circle cx="7" cy="5" r="3.6" fill="none" stroke="#9b6fd0" stroke-width="1"/><circle cx="7" cy="5" r="1.2" fill="#9b6fd0"/><path d="M3.8 6 L0.6 8.4 L3.2 9 L3.8 11.4 L6 8.6" fill="none" stroke="#9b6fd0" stroke-width="1"/></svg>
<svg class="abs" style="left:90px;top:499.5px" width="10" height="10" viewBox="0 0 10 10"><circle cx="5" cy="5" r="4.6" fill="#d3222a"/><path d="M3.2 3.2 L6.8 6.8 M6.8 3.2 L3.2 6.8" stroke="#fff" stroke-width="1.2"/></svg>
<div class="tx" style="left:103.5px;top:498.5px">0</div>
<svg class="abs" style="left:126.5px;top:499.5px" width="11" height="10" viewBox="0 0 11 10"><path d="M5.5 0.6 L10.6 9.4 H0.4 Z" fill="#c8922e"/><path d="M5.5 3.4 V6.4 M5.5 7.4 V8.4" stroke="#fff" stroke-width="1.1"/></svg>
<div class="tx" style="left:140px;top:498.5px">99+</div>
<svg class="abs" style="left:170px;top:499.5px" width="9" height="10" viewBox="0 0 9 10"><path d="M4.5 9.5 V1 M1 4.4 L4.5 0.9 L8 4.4" fill="none" stroke="#3a3a3a" stroke-width="1"/></svg>
<svg class="abs" style="left:193.5px;top:499.5px" width="9" height="10" viewBox="0 0 9 10"><path d="M4.5 0.5 V9 M1 5.6 L4.5 9.1 L8 5.6" fill="none" stroke="#5a5a5a" stroke-width="1"/></svg>
<div class="abs" style="left:215px;top:500px;width:1px;height:10px;background:#c6c8d2"></div>
<svg class="abs" style="left:226px;top:499px" width="12" height="12" viewBox="0 0 12 12"><path d="M9.6 0.8 L6.2 5.2" stroke="#3a3a3a" stroke-width="1.4"/><path d="M4.6 4.4 L7.6 6.8 L5 10.8 L1 7.8 Z" fill="#d9a647" stroke="#a87a22" stroke-width="0.6"/><circle cx="2.2" cy="1.6" r="0.7" fill="#1f72c4"/><circle cx="4.6" cy="0.9" r="0.6" fill="#1f72c4"/><circle cx="1" cy="4" r="0.6" fill="#1f72c4"/></svg>
<div class="arr" style="left:240.5px;top:504px"></div>
<div class="abs" style="left:270px;top:501px;width:0;height:0;border-top:3.5px solid transparent;border-bottom:3.5px solid transparent;border-right:4px solid #868999"></div>
<div class="abs" style="left:279px;top:500.5px;width:547px;height:8.5px;background:#c2c3c9"></div>
<div class="abs" style="left:832px;top:501px;width:0;height:0;border-top:3.5px solid transparent;border-bottom:3.5px solid transparent;border-left:4px solid #868999"></div>
<div class="tx" style="left:858.5px;top:498.5px;letter-spacing:-0.45px">Ln: 1626</div>
<div class="tx" style="left:906.5px;top:498.5px;letter-spacing:-0.4px">Ch: 24</div>
<div class="tx" style="left:947px;top:498.5px;letter-spacing:-0.55px">MIXED</div>
<div class="tx" style="left:990.5px;top:498.5px;transform:scaleX(0.8);transform-origin:0 0">CRLF</div>
<!-- status bar -->
<div class="abs" style="left:0;top:518px;width:1024px;height:19.5px;background:#40508d"></div>
<svg class="abs" style="left:3px;top:521px" width="14" height="14" viewBox="0 0 14 14"><path d="M1 1 H12.8 V9.4 H8.8 L6.6 11.8 L4.4 9.4 H1 Z" fill="#4a5a96" stroke="#f0f2fa" stroke-width="1"/></svg>
<div class="tx" style="left:22.5px;top:521.5px;color:#fff;letter-spacing:-0.5px">Ready</div>
<svg class="abs" style="left:739.5px;top:521.5px" width="10" height="12" viewBox="0 0 10 12"><path d="M5 11.5 V1 M1 5 L5 1 L9 5" fill="none" stroke="#fff" stroke-width="1"/></svg>
<div class="tx" style="left:757px;top:521.5px;color:#fff;letter-spacing:0.06px">Add to Source Control</div>
<div class="abs" style="left:858px;top:526px;width:0;height:0;border-left:3px solid transparent;border-right:3px solid transparent;border-bottom:3.5px solid #fff"></div>
<svg class="abs" style="left:881.5px;top:521.5px" width="13" height="12" viewBox="0 0 13 12"><path d="M0.8 0.8 H12.2 V3.2 H0.8 Z M2 3.2 V11 H11 V3.2 M4.6 5.2 V8 H8.4 V5.2" fill="none" stroke="#fff" stroke-width="1"/></svg>
<div class="tx" style="left:899.5px;top:521.5px;color:#fff;letter-spacing:-0.2px">Select Repository</div>
<div class="abs" style="left:976.5px;top:526px;width:0;height:0;border-left:3px solid transparent;border-right:3px solid transparent;border-bottom:3.5px solid #fff"></div>
<svg class="abs" style="left:998px;top:520.5px" width="18" height="16" viewBox="0 0 18 16"><path d="M2.4 10.6 C3.8 9.2 3.4 7 3.8 5 C4.2 2.8 5.4 1.4 7.2 1.4 C9 1.4 10.2 2.8 10.6 5 C10.7 5.6 10.7 6.2 10.8 6.8 M2.4 10.6 H8 M5.8 12.4 H8" fill="none" stroke="#fff" stroke-width="1"/><circle cx="13" cy="11.4" r="3.8" fill="#e0352c"/><path d="M13.2 9.4 V13.4 M12.3 10.1 L13.2 9.4" stroke="#fff" stroke-width="0.8" fill="none"/></svg>
<!-- taskbar -->
<div class="abs" style="left:0;top:537.5px;width:1024px;height:38.5px;background:#e4eaf5;border-top:1px solid #c8ccd8"></div>
<svg class="abs" style="left:183px;top:547.5px" width="19" height="19" viewBox="0 0 19 19"><defs><linearGradient id="wg" x1="0" y1="0" x2="1" y2="1"><stop offset="0" stop-color="#5cc8fa"/><stop offset="1" stop-color="#0a6fd0"/></linearGradient></defs><rect x="0" y="0" width="9" height="9" rx="0.8" fill="url(#wg)"/><rect x="10" y="0" width="9" height="9" rx="0.8" fill="url(#wg)"/><rect x="0" y="10" width="9" height="9" rx="0.8" fill="url(#wg)"/><rect x="10" y="10" width="9" height="9" rx="0.8" fill="url(#wg)"/></svg>
<div class="abs" style="left:213.5px;top:544.5px;width:174.5px;height:24.3px;border-radius:12.2px;background:#f8fafd;border:1px solid #d6dbe7"></div>
<svg class="abs" style="left:222px;top:551px" width="13" height="13" viewBox="0 0 13 13"><circle cx="5.4" cy="5.4" r="4" fill="none" stroke="#222" stroke-width="1.4"/><path d="M8.4 8.4 L11.6 11.6" stroke="#222" stroke-width="1.5"/></svg>
<div class="abs" style="left:243px;top:550px;font-size:11px;line-height:14px;color:#5a5a5a;letter-spacing:-0.25px">Search</div>
<svg class="abs" style="left:354px;top:547px" width="26" height="21" viewBox="0 0 26 21"><rect x="0.8" y="0.5" width="1.6" height="20" fill="#6a4a3a"/><path d="M2.4 2.6 C6 1 9 4 13 3 C17 2 20 1 24.6 2.4 V16 C20 14.6 17 15.6 13 16.6 C9 17.6 6 14.6 2.4 16.2 Z" fill="#f4f4f6"/><path d="M2.4 2.6 C4.4 1.8 6 2.2 7.6 2.8 V16.4 C6 15.6 4.4 15.4 2.4 16.2 Z" fill="#e0262e"/><path d="M19.4 1.6 C21 1.6 22.8 1.8 24.6 2.4 V16 C22.8 15.4 21 15.2 19.4 15.2 Z" fill="#e0262e"/><path d="M13.4 5 L14.4 7 L15.8 6.4 L15.4 9 L17 8.4 L16.4 10 L17.2 10.6 L14.6 12 L14.8 13.4 L13.6 13 V14.6 H13.2 V13 L12 13.4 L12.2 12 L9.6 10.6 L10.4 10 L9.8 8.4 L11.4 9 L11 6.4 L12.4 7 Z" fill="#e0262e"/></svg>
<svg class="abs" style="left:397.5px;top:547.5px" width="21" height="19" viewBox="0 0 21 19"><rect x="6" y="0.5" width="14" height="12" rx="1.5" fill="#f4f4f4" stroke="#d0d0d0" stroke-width="0.6"/><rect x="0.5" y="5.5" width="14" height="12.5" rx="1.5" fill="#2a2a2a"/><rect x="6" y="5.5" width="8.5" height="7" fill="#bdbdbd"/></svg>
<!-- copilot -->
<svg class="abs" style="left:433px;top:547px" width="21" height="19" viewBox="0 0 21 19"><defs><linearGradient id="cpl" x1="0" y1="0" x2="0" y2="1"><stop offset="0" stop-color="#1f8fe0"/><stop offset="0.3" stop-color="#2aa8d8"/><stop offset="0.55" stop-color="#4cc47a"/><stop offset="0.8" stop-color="#e8d040"/><stop offset="1" stop-color="#f0b030"/></linearGradient><linearGradient id="cpr" x1="0" y1="0" x2="0" y2="1"><stop offset="0" stop-color="#9a5cf0"/><stop offset="0.35" stop-color="#c860d8"/><stop offset="0.65" stop-color="#f06080"/><stop offset="1" stop-color="#f0a038"/></linearGradient></defs><path d="M4.6 0.6 H11.6 C13 0.6 13.6 1.4 13.2 2.8 L10.6 11.4 C10.2 12.6 9.4 13.2 8.2 13.2 H3 C1 13.2 0.2 11.8 0.8 10 L2.6 3.4 C3 1.4 3.6 0.6 4.6 0.6 Z" fill="url(#cpl)"/><path d="M12.6 4.6 H17.6 C19.6 4.6 20.4 6 19.8 7.8 L17.8 14.6 C17.2 16.6 16.6 17.6 15.4 17.6 H8.6 C7.2 17.6 6.6 16.8 7 15.4 L9.8 6.8 C10.2 5.4 11.2 4.6 12.6 4.6 Z" fill="url(#cpr)"/><path d="M12.4 3.2 L8 15.8" stroke="#f4f6fb" stroke-width="1.5"/><path d="M10.8 0.6 H12 C14 0.8 15 2 15.4 3.6 L15.8 4.8 H12.6 Z" fill="#2a4ad0"/><path d="M9.6 17.6 H8.4 C6.8 17.4 5.8 16.4 5.4 14.8 L5 13.2 H8.2 Z" fill="#e83a30"/></svg>
<!-- edge -->
<svg class="abs" style="left:468.5px;top:547px" width="20" height="20" viewBox="0 0 20 20"><defs><linearGradient id="eg1" x1="0" y1="0" x2="0.6" y2="1"><stop offset="0" stop-color="#38b8ea"/><stop offset="0.55" stop-color="#1a6cc0"/><stop offset="1" stop-color="#154f98"/></linearGradient><linearGradient id="eg2" x1="0" y1="0" x2="1" y2="0.3"><stop offset="0" stop-color="#30b4e6"/><stop offset="0.55" stop-color="#46c6a8"/><stop offset="1" stop-color="#68d058"/></linearGradient></defs><circle cx="10" cy="10" r="9.6" fill="url(#eg1)"/><path d="M0.8 8 C1.6 3.4 5.4 0.4 10 0.4 C15.4 0.4 19.6 4.4 19.6 9 C19.6 12 17.6 13.8 15 13.8 C12.8 13.8 12 12.8 12.6 11.6 C13.4 10 12.6 7.2 9.4 7 C5.6 6.8 2 8.8 0.8 8 Z" fill="url(#eg2)"/><path d="M7.4 9.2 C6.2 12.2 7.6 16 11.8 16.8 C14.4 17.2 16.8 16.4 18.2 14.6 C15.6 15.4 11.4 15.2 10 12.2 C9.6 11.2 9.6 10.2 10.2 9.2 C9.4 8.6 8 8.6 7.4 9.2 Z" fill="#eef6fc"/></svg>
<!-- explorer -->
<svg class="abs" style="left:503.5px;top:548px" width="21" height="18" viewBox="0 0 21 18"><path d="M0.5 2 C0.5 1.2 1 0.6 1.8 0.6 H6.6 L8.6 2.6 H19 C19.8 2.6 20.4 3.2 20.4 4 V16 C20.4 16.8 19.8 17.4 19 17.4 H1.8 C1 17.4 0.5 16.8 0.5 16 Z" fill="#f4b400"/><path d="M0.5 5 H20.4 V16 C20.4 16.8 19.8 17.4 19 17.4 H1.8 C1 17.4 0.5 16.8 0.5 16 Z" fill="#ffd75e"/><path d="M4 13 H17 V17.4 H4 Z" fill="#2a7fd4"/><path d="M6 14.6 H15" stroke="#14508f" stroke-width="0.8"/></svg>
<!-- store -->
<svg class="abs" style="left:538.5px;top:546.5px" width="20" height="20" viewBox="0 0 20 20"><path d="M5.6 4 V2.8 C5.6 1.8 6.4 1.2 7.4 1.2 H12.6 C13.6 1.2 14.4 1.8 14.4 2.8 V4" fill="none" stroke="#3aa4ec" stroke-width="1.3"/><path d="M0.6 3.4 H19.4 V17.2 C19.4 18.6 18.4 19.6 17 19.6 H3 C1.6 19.6 0.6 18.6 0.6 17.2 Z" fill="#1b4b88"/><rect x="6" y="7" width="3.7" height="3.7" fill="#f04a36"/><rect x="10.4" y="7" width="3.7" height="3.7" fill="#7cc142"/><rect x="6" y="11.4" width="3.7" height="3.7" fill="#2aa4ee"/><rect x="10.4" y="11.4" width="3.7" height="3.7" fill="#fcbd1a"/></svg>
<!-- outlook -->
<svg class="abs" style="left:573.5px;top:547px" width="20" height="19" viewBox="0 0 20 19"><path d="M2.4 7.4 L10.6 1 L19.2 6.4 V16 C19.2 17 18.6 17.6 17.6 17.6 H4 C3 17.6 2.4 17 2.4 16 Z" fill="#38a8f0"/><path d="M10.6 1 L19.2 6.4 L12 11.6 L6.2 6.6 Z" fill="#4a5ed8"/><path d="M6.2 6.6 L10.6 1 L14.6 3.6 L8.8 9 Z" fill="#2f8ee8"/><path d="M8 17.6 L19.2 9.4 V16 C19.2 17 18.6 17.6 17.6 17.6 Z" fill="#48c4f4"/><path d="M2.4 11 L13 17.6 H4 C3 17.6 2.4 17 2.4 16 Z" fill="#2a9ae8"/><rect x="0.6" y="9.4" width="7.6" height="7.2" rx="1.6" fill="#1462c4"/><circle cx="4.4" cy="13" r="1.9" fill="none" stroke="#fff" stroke-width="1.3"/></svg>
<!-- teams -->
<svg class="abs" style="left:608.5px;top:546.5px" width="20" height="20" viewBox="0 0 20 20"><circle cx="15.4" cy="4.8" r="2.5" fill="#7078e8"/><circle cx="8.6" cy="3.4" r="3" fill="#8088f0"/><path d="M12.6 8 H18.4 C19 8 19.4 8.4 19.4 9 V14.6 C19.4 17 17.8 18.4 16 18.4 C14.2 18.4 12.6 17 12.6 14.6 Z" fill="#5860d8"/><path d="M4 7.6 H13.2 C13.8 7.6 14.2 8 14.2 8.6 V15 C14.2 18 12 19.6 9.4 19.6 C6.6 19.6 4 18 4 15 Z" fill="#7b83eb"/><rect x="1.2" y="9.6" width="7.8" height="7.8" rx="1.4" fill="#4048b8"/><path d="M3.2 11.6 H7 M5.1 11.6 V15.6" stroke="#fff" stroke-width="1.3"/></svg>
<!-- chrome -->
<svg class="abs" style="left:644px;top:547px" width="20" height="20" viewBox="0 0 20 20"><circle cx="10" cy="10" r="9.6" fill="#fbc116"/><path d="M10 10 L1.7 5.2 A9.6 9.6 0 0 1 18.3 5.2 Z" fill="#e33b2e"/><path d="M1.7 5.2 A9.6 9.6 0 0 0 8 19.4 L13 11.6 L10 10 Z" fill="#2da94f"/><path d="M1.7 5.2 L6.2 12.4 L10 10 Z" fill="#2da94f"/><path d="M10 5.6 H18.5 A9.6 9.6 0 0 0 1.7 5.2 L5.8 12 Z" fill="#e33b2e"/><circle cx="10" cy="10" r="4.5" fill="#fff"/><circle cx="10" cy="10" r="3.6" fill="#3f7fe8"/></svg>
<!-- media player -->
<svg class="abs" style="left:679.5px;top:547px" width="20" height="20" viewBox="0 0 20 20"><defs><linearGradient id="mp" x1="0" y1="0" x2="1" y2="1"><stop offset="0" stop-color="#f7a428"/><stop offset="0.5" stop-color="#e8553a"/><stop offset="1" stop-color="#8a3cc0"/></linearGradient></defs><circle cx="10" cy="10" r="9.6" fill="url(#mp)"/><circle cx="10" cy="10" r="8" fill="#2c2830"/><path d="M7.6 5.8 L14.2 10 L7.6 14.2 Z" fill="#fff"/></svg>
<!-- VS active -->
<div class="abs" style="left:709.8px;top:541.7px;width:30.2px;height:30.6px;border-radius:3.5px;background:#f2f5fb;border:1px solid #dde2ee"></div>
<svg class="abs" style="left:714.5px;top:546.5px" width="21" height="21" viewBox="0 0 18 18"><path d="M1.2 5.9 L2.8 5 L12.8 13 V17 Z" fill="#7a52c6"/><path d="M1.2 12.1 L2.8 13 L12.8 5 V1 Z" fill="#9f72e6"/><path d="M1.2 5.9 L2.8 5 V13 L1.2 12.1 Z" fill="#5f3fa6"/><path d="M12.6 1 L16.9 3 V15 L12.6 17 Z" fill="#c3a0f5"/><path d="M12.7 5.6 L8.4 9 L12.7 12.4 Z" fill="#f2f5fb"/><path d="M2.8 7.2 L5 9 L2.8 10.8 Z" fill="#f2f5fb"/></svg>
<div class="abs" style="left:718.8px;top:569.6px;width:12.2px;height:2.4px;border-radius:1.2px;background:#2f7fd8"></div>
<!-- blue monitor app -->
<svg class="abs" style="left:750px;top:547.5px" width="20" height="18" viewBox="0 0 20 18"><rect x="1.6" y="0.5" width="17" height="12.8" rx="0.8" fill="#1f86d8"/><rect x="4.2" y="3.2" width="8.6" height="10.2" fill="#3cb6f2"/><rect x="0.4" y="12.7" width="19.2" height="1.3" fill="#2a8ae2"/><rect x="4.2" y="14" width="8.6" height="3" rx="0.6" fill="#1a74cc"/></svg>
<!-- chrome w/ avatar -->
<svg class="abs" style="left:785px;top:542.5px" width="25" height="25" viewBox="0 0 25 25"><g transform="translate(0,4.6)"><circle cx="10" cy="10" r="9.6" fill="#fbc116"/><path d="M1.7 5.2 A9.6 9.6 0 0 0 8 19.4 L13 11.6 L10 10 Z" fill="#2da94f"/><path d="M1.7 5.2 L6.2 12.4 L10 10 Z" fill="#2da94f"/><path d="M10 5.6 H18.5 A9.6 9.6 0 0 0 1.7 5.2 L5.8 12 Z" fill="#e33b2e"/><circle cx="10" cy="10" r="4.5" fill="#fff"/><circle cx="10" cy="10" r="3.6" fill="#3f7fe8"/></g><circle cx="17.6" cy="6.4" r="6.2" fill="#2a1c16"/><path d="M15 8 C16 5 19 4 21 6" stroke="#5a3a2a" stroke-width="1.4" fill="none"/></svg>
<div class="abs" style="left:792.5px;top:570px;width:5.5px;height:2px;border-radius:1px;background:#8a8f98"></div>
<!-- tray -->
<svg class="abs" style="left:866.5px;top:553.5px" width="11" height="7" viewBox="0 0 11 7"><path d="M1 6 L5.5 1.4 L10 6" fill="none" stroke="#222" stroke-width="1.3"/></svg>
<svg class="abs" style="left:890.5px;top:551.2px" width="14" height="11" viewBox="0 0 14 11"><path d="M0.8 3.8 C4.4 0.4 9.6 0.4 13.2 3.8 M2.8 5.9 C5.2 3.6 8.8 3.6 11.2 5.9 M4.8 7.8 C6.2 6.6 7.8 6.6 9.2 7.8" fill="none" stroke="#222" stroke-width="1"/><circle cx="7" cy="9.6" r="1" fill="#222"/></svg>
<svg class="abs" style="left:909.5px;top:550.5px" width="15" height="12" viewBox="0 0 15 12"><path d="M0.8 4 H3 L6 1.2 V10.8 L3 8 H0.8 Z" fill="none" stroke="#222" stroke-width="0.9"/><path d="M7.8 4.4 C8.6 5.4 8.6 6.6 7.8 7.6 M9.4 3 C11 4.8 11 7.2 9.4 9 M11 1.6 C13.4 4.2 13.4 7.8 11 10.4" fill="none" stroke="#222" stroke-width="0.9"/></svg>
<svg class="abs" style="left:929px;top:552px" width="18" height="9" viewBox="0 0 18 9"><rect x="0.6" y="0.6" width="14.6" height="7.8" rx="2" fill="none" stroke="#222" stroke-width="1"/><rect x="2" y="2" width="11.8" height="5" rx="1" fill="#222"/><path d="M16.4 3 V6" stroke="#222" stroke-width="1.2"/></svg>
<div class="abs" style="left:940px;top:544px;width:68px;text-align:right;font-size:9.8px;line-height:12.5px;color:#1c1c1c;letter-spacing:-0.2px">7:19 PM<br>2026-02-15</div>


</body></html>
